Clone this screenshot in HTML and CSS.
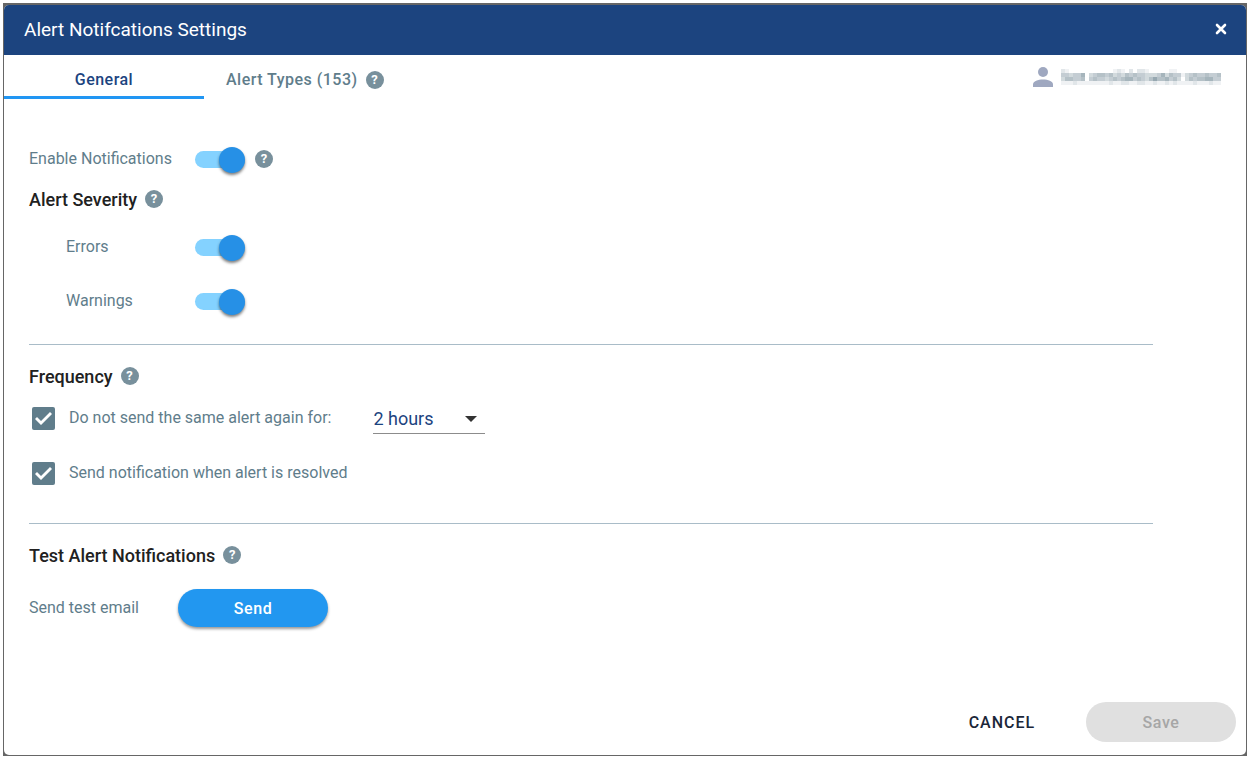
FILE: index.html
```
<!DOCTYPE html>
<html lang="en">
<head>
  <meta charset="UTF-8">
  <meta name="viewport" content="width=device-width, initial-scale=1.0">
  <title>Alert Notifications Settings</title>
  <link rel="stylesheet" href="styles.css">
</head>
<body>
  <div class="backdrop">
    <div class="dialog" role="dialog" aria-labelledby="title">
      <header class="titlebar">
        <h1 id="title">Alert Notifcations Settings</h1>
        <button class="close" type="button" aria-label="Close">
          <svg width="12" height="12" viewBox="0 0 12 12"><path d="M2 2l8 8M10 2l-8 8" stroke="#fff" stroke-width="2.6" stroke-linecap="round"/></svg>
        </button>
      </header>

      <nav class="tabs">
        <button class="tab active" type="button">General</button>
        <button class="tab" type="button">Alert Types (153)</button>
        <button class="help" type="button" aria-label="Help">?</button>
        <div class="account">
          <svg width="20" height="20" viewBox="0 0 20 20" fill="#9fa8c0"><circle cx="10" cy="5" r="5"/><path d="M0 20v-2.500c0-3.300 5-5 10-5s10 1.700 10 5V20z"/></svg>
          <svg id="masked" width="160" height="16" viewBox="0 0 160 16" role="img" aria-label="Hidden account" fill="#6b8390" shape-rendering="crispEdges"></svg>
        </div>
      </nav>

      <main>
        <section>
          <div class="row">
            <label class="name" for="enable">Enable Notifications</label>
            <input class="switch" type="checkbox" id="enable" checked>
            <button class="help" type="button" aria-label="Help">?</button>
          </div>
          <h2>Alert Severity <button class="help" type="button" aria-label="Help">?</button></h2>
          <div class="row severity">
            <label class="name" for="errors">Errors</label>
            <input class="switch" type="checkbox" id="errors" checked>
          </div>
          <div class="row severity">
            <label class="name" for="warnings">Warnings</label>
            <input class="switch" type="checkbox" id="warnings" checked>
          </div>
        </section>

        <section class="frequency">
          <h2>Frequency <button class="help" type="button" aria-label="Help">?</button></h2>
          <div class="row option">
            <input class="check" type="checkbox" id="repeat" checked>
            <label for="repeat">Do not send the same alert again for:</label>
            <div class="select">
              <select aria-label="Repeat interval">
                <option>2 hours</option>
              </select>
            </div>
          </div>
          <div class="row option">
            <input class="check" type="checkbox" id="resolved" checked>
            <label for="resolved">Send notification when alert is resolved</label>
          </div>
        </section>

        <section>
          <h2>Test Alert Notifications <button class="help" type="button" aria-label="Help">?</button></h2>
          <div class="row test">
            <label for="send">Send test email</label>
            <button class="btn primary" type="button" id="send">Send</button>
          </div>
        </section>
      </main>

      <footer>
        <button class="cancel" type="button">CANCEL</button>
        <button class="btn save" type="button" disabled>Save</button>
      </footer>
    </div>
  </div>
  <script>
    // pixelated account name, one digit of shade per 4px block
    const shades = [
      "2100000000000121020221000001100000000000",
      "4434460345545343545443334635441345445445",
      "3554450454434545664543575564530354556644",
      "1112111111112112211221121121211112111211"
    ];
    let blocks = "";
    shades.forEach((row, y) => {
      [...row].forEach((shade, x) => {
        blocks += `<rect x="${x * 4}" y="${y * 4}" width="4" height="4" opacity="${shade / 10}"/>`;
      });
    });
    document.getElementById("masked").innerHTML = blocks;
  </script>
</body>
</html>
```

FILE: styles.css
```
* {
  box-sizing: border-box;
}
body {
  margin: 0;
  padding: 3px;
  background: #fff;
  font-family: Roboto, sans-serif;
  font-size: 16px;
  color: #5f7d8b;
}
button, select, input {
  font-family: inherit;
  margin: 0;
}
button {
  border: none;
  background: none;
  padding: 0;
  cursor: pointer;
}
.backdrop {
  display: flex;
  min-height: calc(100vh - 6px);
  padding: 2px 1px 1px;
  background: #666;
}
.dialog {
  flex: 1;
  display: flex;
  flex-direction: column;
  background: #fff;
  border-radius: 5px;
  overflow: hidden;
}
.titlebar {
  display: flex;
  align-items: center;
  justify-content: space-between;
  height: 50px;
  padding: 0 19px 2px 20px;
  background: #1c447f;
}
h1 {
  margin: 0;
  font-size: 19px;
  font-weight: 400;
  color: #fff;
}
.close {
  display: flex;
}
.tabs {
  display: flex;
  align-items: center;
  height: 44px;
  padding-right: 25px;
}
.tab {
  height: 44px;
  padding: 4px 0 0;
  margin-left: 22px;
  font-size: 16px;
  font-weight: 500;
  letter-spacing: 0.03em;
  color: #5f7d8b;
}
.tab.active {
  width: 200px;
  margin: 0;
  padding-top: 8px;
  color: #1c447f;
  border-bottom: 3px solid #2196f3;
}
.help {
  width: 18px;
  height: 18px;
  border-radius: 50%;
  background: #78909c;
  color: #fff;
  font-size: 13px;
  font-weight: 700;
  line-height: 18px;
}
.tabs .help {
  margin: 6px 0 0 8px;
}
.account {
  display: flex;
  align-items: center;
  gap: 8px;
  margin-left: auto;
}
main {
  flex: 1;
  padding: 43px 25px 0;
}
section {
  margin-right: 68px;
  padding-bottom: 16px;
  border-bottom: 1px solid #a9bcc8;
}
section + section {
  padding-top: 20px;
}
section.frequency {
  padding-bottom: 28px;
}
section:last-child {
  border-bottom: none;
}
h2 {
  display: flex;
  align-items: center;
  gap: 8px;
  margin: 0 0 10px;
  height: 22px;
  font-size: 18px;
  font-weight: 500;
  color: #212121;
}
.row + h2 {
  margin-top: 12px;
}
.row {
  display: flex;
  align-items: center;
  height: 34px;
}
.row label {
  padding-bottom: 2px;
}
.name {
  width: 166px;
}
.switch {
  appearance: none;
  position: relative;
  width: 50px;
  height: 17px;
  margin-right: 10px;
  background: #84d2ff;
  border-radius: 9px;
}
.switch::before {
  content: "";
  position: absolute;
  top: -4px;
  right: 0;
  width: 26px;
  height: 26px;
  border-radius: 50%;
  background: #2690e6;
  box-shadow: 0 2px 3px rgba(0, 0, 0, 0.5);
}
.switch:not(:checked)::before {
  right: 24px;
}
.severity {
  height: 54px;
  padding-left: 37px;
}
.severity .name {
  width: 129px;
}
.option {
  height: 43px;
}
.option + .option {
  margin-top: 12px;
}
.check {
  appearance: none;
  width: 23px;
  height: 23px;
  margin: 0 14px 0 3px;
  border-radius: 2px;
  background: #607d8b;
}
.check:checked::before {
  content: "";
  display: block;
  width: 23px;
  height: 23px;
  background: #fff;
  clip-path: polygon(3px 12px, 5px 10px, 9px 14px, 18px 5px, 20px 7px, 9px 18px);
}
.select {
  position: relative;
  width: 112px;
  margin-left: 42px;
}
.select::after {
  content: "";
  position: absolute;
  top: 12px;
  right: 8px;
  border: 6px solid transparent;
  border-top-color: #333;
  border-bottom: none;
  pointer-events: none;
}
.select select {
  appearance: none;
  display: block;
  width: 100%;
  height: 30px;
  padding: 0;
  border: none;
  border-bottom: 1px solid #8c8c8c;
  background: none;
  font-size: 18px;
  color: #1c447f;
}
.test {
  height: 64px;
}
.btn {
  width: 150px;
  height: 38px;
  border-radius: 20px;
  font-size: 16px;
  font-weight: 500;
  letter-spacing: 0.04em;
}
.primary {
  margin-left: 39px;
  background: #2297f0;
  color: #fff;
  box-shadow: 0 2px 3px rgba(0, 0, 0, 0.4);
}
footer {
  display: flex;
  align-items: center;
  justify-content: flex-end;
  gap: 51px;
  padding: 0 10px 13px;
}
.cancel {
  font-size: 16px;
  font-weight: 500;
  letter-spacing: 0.06em;
  color: #1b2638;
}
.save {
  height: 40px;
  background: #e0e0e0;
  color: #a6a6a6;
}
```
